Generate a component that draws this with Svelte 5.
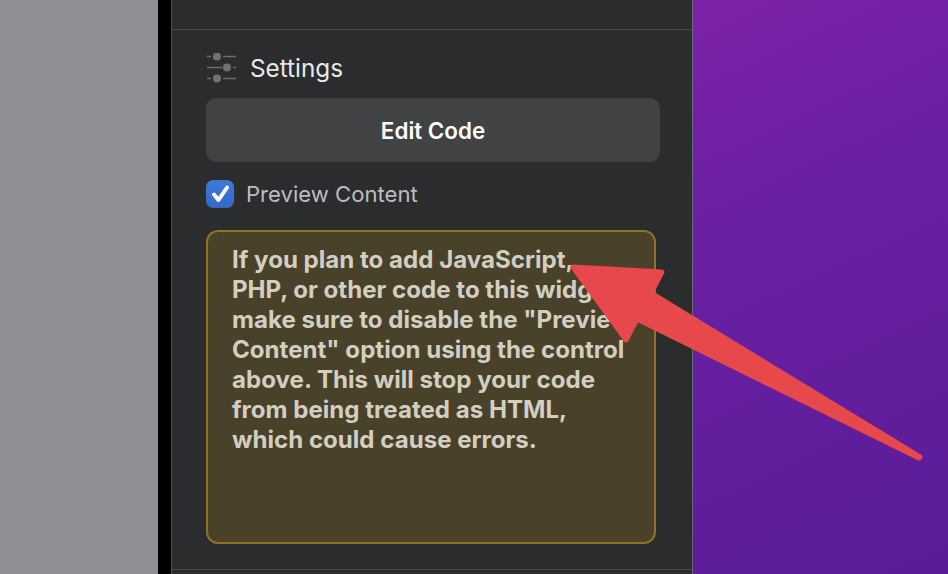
<script>
  const notice = [
    'If you plan to add JavaScript,',
    'PHP, or other code to this widget,',
    'make sure to disable the "Preview',
    'Content" option using the control',
    'above. This will stop your code',
    'from being treated as HTML,',
    'which could cause errors.',
  ];
</script>

<main class="screen">
  <div class="gutter"></div>
  <div class="edge"></div>
  <section class="panel">
    <div class="top-space"></div>
    <div class="content">
      <header class="heading">
        <svg class="sliders" width="30" height="30" viewBox="0 0 30 30" aria-hidden="true">
          <g stroke="#6c6d6f" stroke-width="1.4" fill="none">
            <path d="M1 3.5H5M17 3.5H30" />
            <path d="M1 14.5H16M27 14.5H30" />
            <path d="M1 25.5H5M17 25.5H30" />
          </g>
          <g fill="#717274">
            <circle cx="11" cy="3.5" r="4" />
            <circle cx="21" cy="14.5" r="4" />
            <circle cx="11" cy="25.5" r="4" />
          </g>
        </svg>
        <span>Settings</span>
      </header>

      <button class="edit">Edit Code</button>

      <label class="check">
        <span class="box">
          <svg width="28" height="28" viewBox="0 0 28 28" aria-hidden="true">
            <path d="M8 14.5L12.5 20L21 7.5" fill="none" stroke="#fff" stroke-width="4" stroke-linecap="round" stroke-linejoin="round" />
          </svg>
        </span>
        <span>Preview Content</span>
      </label>

      <div class="notice">
        {#each notice as line}
          <div>{line}</div>
        {/each}
      </div>
    </div>
    <div class="rule"></div>
  </section>
  <div class="wallpaper"></div>

  <svg class="arrow" width="948" height="574" viewBox="0 0 948 574" aria-hidden="true">
    <polygon
      points="573,267 662,272 651,293 920,457 919,458 637,319 626,340"
      fill="#e6484b"
      stroke="#e6484b"
      stroke-width="5"
      stroke-linejoin="round"
    />
  </svg>
</main>

<style>
  :global(body) {
    margin: 0;
  }

  .screen {
    position: relative;
    display: flex;
    width: 948px;
    height: 574px;
    overflow: hidden;
    background: #8d8e92;
    font-family: Inter, "Liberation Sans", sans-serif;
  }

  .gutter {
    width: 158px;
    flex: none;
    background: #8e8f93;
  }

  .edge {
    width: 13px;
    flex: none;
    background: #000;
  }

  .panel {
    width: 520px;
    flex: none;
    display: flex;
    flex-direction: column;
    background: #2b2c2e;
    border-left: 1px solid #4e4f51;
    border-right: 1px solid #6a6b6d;
  }

  .top-space {
    height: 29px;
    flex: none;
    border-bottom: 1px solid #48494b;
  }

  .content {
    flex: 1;
    display: flex;
    flex-direction: column;
    padding: 0 32px 0 34px;
  }

  .heading {
    box-sizing: border-box;
    display: flex;
    align-items: center;
    gap: 14px;
    height: 68px;
    padding-top: 8px;
    font-size: 24.3px;
    color: #e8e8e8;
  }

  .sliders {
    flex: none;
  }

  .edit {
    height: 64px;
    border: none;
    border-radius: 10px;
    background: #414244;
    color: #fff;
    font: 600 22.4px Inter, "Liberation Sans", sans-serif;
  }

  .check {
    display: flex;
    align-items: center;
    gap: 12px;
    margin-top: 18px;
    height: 28px;
    font-size: 22.1px;
    color: #bdbdbe;
  }

  .box {
    width: 28px;
    height: 28px;
    flex: none;
    display: flex;
    border-radius: 7px;
    background: linear-gradient(#3f78dc, #3468c6);
  }

  .notice {
    box-sizing: border-box;
    height: 314px;
    margin: 22px 4px 0 0;
    padding: 13px 24px;
    border: 2px solid #8e7325;
    border-radius: 12px;
    background: #4a412b;
    color: #d2cec2;
    font-size: 24.1px;
    font-weight: 700;
    line-height: 30px;
    white-space: nowrap;
  }

  .rule {
    height: 1px;
    flex: none;
    margin-bottom: 4px;
    background: #48494b;
  }

  .wallpaper {
    flex: 1;
    background: linear-gradient(155deg, #7c22a8 0%, #6a20a4 35%, #5a1c96 100%);
  }

  .arrow {
    position: absolute;
    top: 0;
    left: 0;
    pointer-events: none;
  }
</style>
